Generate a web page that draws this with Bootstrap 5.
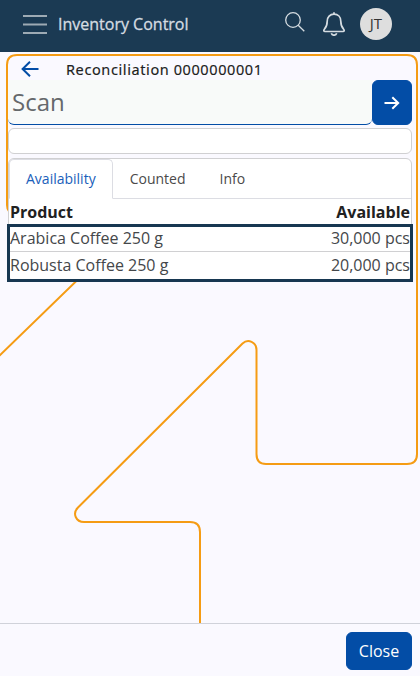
<!DOCTYPE html>
<html lang="en">
<head>
<meta charset="utf-8">
<meta name="viewport" content="width=device-width, initial-scale=1">
<title>Inventory Control</title>
<link href="https://cdn.jsdelivr.net/npm/bootstrap@5.3.0/dist/css/bootstrap.min.css" rel="stylesheet">
<style>
body{font-family:"Open Sans","Noto Sans",sans-serif;background:#faf9ff;color:#212529;height:676px;overflow:hidden}
.topbar{height:52px;background:#1b3a53;color:#d5dce1;padding-left:23px;padding-right:28px}
.brand{font-size:16px;-webkit-text-stroke:.3px #d5dce1;margin-left:11px;line-height:24px;margin-top:-4px}
.topbar svg{display:block}
.menu-icon,.bell-icon{margin-top:-4px}
.search-icon{margin:-8px 18px 0 0}
.avatar{width:32px;height:32px;background:#dedede;color:#333;font-size:15px;margin:-4px 0 0 15px;padding-bottom:1px}
.backdrop{left:0;top:52px;z-index:0}
.workspace{padding:4px 8px 0;z-index:1}
.titlebar{height:24px;padding-left:13px;font-size:14.5px;letter-spacing:.6px}
.titlebar svg{margin-top:2px}
.titlebar h1{font-family:"Noto Sans","Open Sans",sans-serif;font-size:inherit;font-weight:400;-webkit-text-stroke:.15px #212121;line-height:24px;margin:1px 0 0 27px;color:#212121}
.scanrow{height:45px}
.scan-input{background:#f8faf9;border:0;border-bottom:1px solid #034da6;border-radius:0 0 6px 6px;font-size:24px;padding:0 4px 2px;height:45px;color:#5c5f62;line-height:42px}
.scan-input::placeholder{color:#65686b;opacity:1}
.btn-main{--bs-btn-bg:#034da6;--bs-btn-border-color:#034da6;--bs-btn-color:#fff;--bs-btn-border-radius:6px}
.btn-go{width:40px;flex:none}
.message{height:26px;margin-top:3px;border:1px solid #d0d0d2;border-radius:6px}
.panel{margin-top:4px;border:1px solid #d0d0d2;border-radius:6px;height:123px}
.panel .nav-tabs{--bs-nav-tabs-border-color:#dcdde3;--bs-nav-tabs-border-radius:5px;height:40px}
.panel .nav-link{font-size:14px;line-height:21px;padding:8px 16px 10px;color:#4a4a4a;height:40px}
.panel .nav-link.active{color:#1a60ba;border-color:#dcdde3 #dcdde3 #fff}
.stock{font-size:16px;line-height:24px;margin:0;color:#44474a}
.stock th,.stock td{padding:1px 1px 0;border:0;height:27px;background:transparent;color:inherit}
.stock thead th{color:#212121;padding:1px 1px 0;line-height:24px;height:25px}
.stock tbody tr:first-child td{padding-top:2px}
.stock tbody tr+tr td{border-top:1px solid #d0d0d2}
.highlight{left:-2px;right:-2px;top:65px;height:58px;border:3px solid #173751}
.footerbar{height:53px;border-top:1px solid #d0d2da;background:#faf9ff;z-index:1;padding:0 8px}
.footerbar .btn{width:66px;height:38px;padding:0;font-size:16px;margin-top:1px}
</style>
<script src="https://cdn.jsdelivr.net/npm/bootstrap@5.3.0/dist/js/bootstrap.bundle.min.js"></script>
</head>
<body class="d-flex flex-column position-relative">
<header class="topbar d-flex align-items-center flex-shrink-0">
  <svg class="menu-icon" width="24" height="20" viewBox="0 0 24 20" stroke="#9daab4" stroke-width="2"><path d="M0 2H24M0 10.500H24M0 19H24"/></svg>
  <span class="brand me-auto">Inventory Control</span>
  <svg class="search-icon" width="20" height="20" viewBox="0 0 20 20" fill="none" stroke="#d5dce1" stroke-width="1.3"><circle cx="8" cy="8" r="7.300"/><path d="M13.200 13.200L19.300 19.200"/></svg>
  <svg class="bell-icon" width="22" height="24" viewBox="0 0 22 24" fill="none" stroke="#d5dce1" stroke-width="1.700" stroke-linejoin="round"><path d="M2 19.500C.7 19.500.4 18.300 1.400 17.200C3.500 15 4.200 13.200 4.200 9.200C4.200 5 7 2.100 11 2.100S17.800 5 17.800 9.200C17.800 13.200 18.500 15 20.600 17.200C21.600 18.300 21.300 19.500 20 19.500Z"/><path d="M11 .2V2M8.300 21.200Q9 23.200 11 23.200T13.700 21.200"/></svg>
  <span class="avatar rounded-circle d-flex align-items-center justify-content-center">JT</span>
</header>
<svg class="backdrop position-absolute" width="420" height="572" viewBox="0 52 420 572" fill="none" stroke="#f59c14" stroke-width="2"><path d="M-2 357L131 228Q139 214 124 214H16Q7 214 7 205V65Q7 55 17 55H407Q417 55 417 65V454Q417 464 407 464H266Q256.500 464 256.500 454V350C256.500 342 248 338.500 242.500 343.500L78 507.500C72 513.500 76 522 84 522H190Q200 522 200 532V624"/></svg>
<main class="workspace position-relative flex-grow-1">
  <div class="titlebar d-flex align-items-center">
    <svg width="18" height="16" viewBox="0 0 18 16" fill="none" stroke="#034da6" stroke-width="2"><path d="M17.500 8H2M9 .8L1.600 8L9 15.200"/></svg>
    <h1>Reconciliation 0000000001</h1>
  </div>
  <div class="scanrow d-flex">
    <input class="scan-input flex-grow-1 w-100" type="text" placeholder="Scan" aria-label="Scan">
    <button class="btn btn-main btn-go p-0 d-flex align-items-center justify-content-center" type="button" aria-label="Submit">
      <svg width="16" height="14" viewBox="0 0 16 14" fill="none" stroke="#fff" stroke-width="2"><path d="M.5 7H14M8.300 1.200L14.200 7L8.300 12.800"/></svg>
    </button>
  </div>
  <div class="message bg-white"></div>
  <section class="panel bg-white position-relative">
    <ul class="nav nav-tabs">
      <li class="nav-item"><a class="nav-link active" href="#">Availability</a></li>
      <li class="nav-item"><a class="nav-link" href="#">Counted</a></li>
      <li class="nav-item"><a class="nav-link" href="#">Info</a></li>
    </ul>
    <table class="table stock">
      <thead><tr><th>Product</th><th class="text-end">Available</th></tr></thead>
      <tbody>
        <tr><td>Arabica Coffee 250 g</td><td class="text-end">30,000 pcs</td></tr>
        <tr><td>Robusta Coffee 250 g</td><td class="text-end">20,000 pcs</td></tr>
      </tbody>
    </table>
    <div class="highlight position-absolute"></div>
  </section>
</main>
<footer class="footerbar d-flex align-items-center justify-content-end flex-shrink-0">
  <button class="btn btn-main" type="button">Close</button>
</footer>
</body>
</html>
